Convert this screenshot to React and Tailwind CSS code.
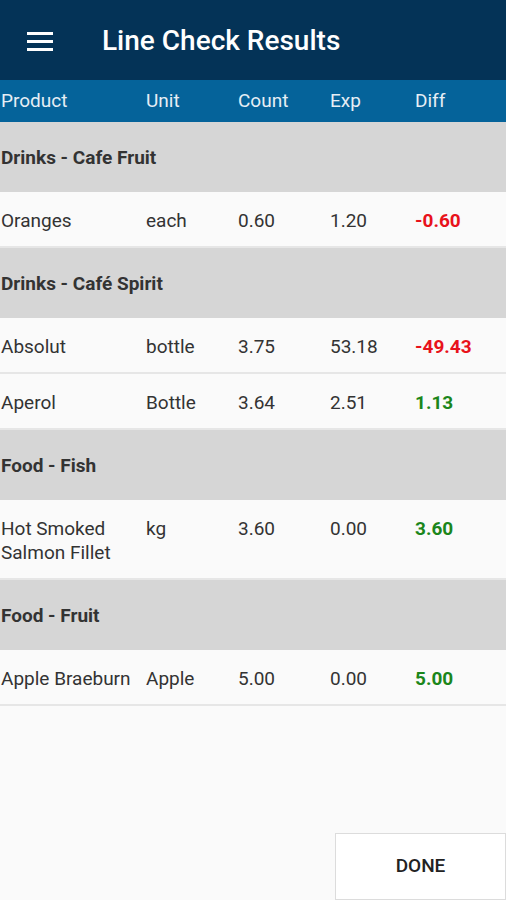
import React from "react";

const groups = [
  {
    name: "Drinks - Cafe Fruit",
    rows: [["Oranges", "each", "0.60", "1.20", "-0.60", "neg"]],
  },
  {
    name: "Drinks - Café Spirit",
    rows: [
      ["Absolut", "bottle", "3.75", "53.18", "-49.43", "neg"],
      ["Aperol", "Bottle", "3.64", "2.51", "1.13", "pos"],
    ],
  },
  {
    name: "Food - Fish",
    rows: [["Hot Smoked Salmon Fillet", "kg", "3.60", "0.00", "3.60", "pos"]],
  },
  {
    name: "Food - Fruit",
    rows: [["Apple Braeburn", "Apple", "5.00", "0.00", "5.00", "pos"]],
  },
];

const cols = "grid grid-cols-[146px_92px_92px_85px_1fr]";

export default function App() {
  return (
    <div
      className="w-[506px] h-[900px] bg-[#fafafa] flex flex-col overflow-hidden"
      style={{ fontFamily: "Roboto, 'Noto Sans', Arial, sans-serif" }}
    >
      <div className="h-[80px] bg-[#043357] flex items-center shrink-0 pt-[2px]">
        <div className="ml-[27px] w-[26px] flex flex-col gap-[5px]">
          <div className="h-[3px] bg-white" />
          <div className="h-[3px] bg-white" />
          <div className="h-[3px] bg-white" />
        </div>
        <div className="ml-[49px] text-white text-[28px] font-medium">
          Line Check Results
        </div>
      </div>
      <div
        className={`${cols} h-[42px] items-center bg-[#05639a] text-[#e6eef5] text-[19px] shrink-0`}
      >
        <div className="pl-[1px]">Product</div>
        <div>Unit</div>
        <div>Count</div>
        <div>Exp</div>
        <div>Diff</div>
      </div>
      {groups.map((g) => (
        <div key={g.name}>
          <div className="h-[70px] bg-[#d6d6d6] flex items-center pl-[1px] pt-[2px] text-[19px] font-bold text-[#333333]">
            {g.name}
          </div>
          {g.rows.map((r) => (
            <div
              key={r[0]}
              className={`${cols} pt-[17px] pb-[13px] border-b-2 border-[#e6e6e6] bg-[#fafafa] text-[19px] leading-[24px] text-[#333333]`}
            >
              <div className="pl-[1px] pr-[4px]">{r[0]}</div>
              <div>{r[1]}</div>
              <div>{r[2]}</div>
              <div>{r[3]}</div>
              <div
                className={`font-bold ${
                  r[5] === "neg" ? "text-[#e8121b]" : "text-[#1b861b]"
                }`}
              >
                {r[4]}
              </div>
            </div>
          ))}
        </div>
      ))}
      <div className="flex-1" />
      <div className="flex justify-end shrink-0">
        <button className="w-[171px] h-[67px] border border-[#dcdcdc] bg-white text-[19px] font-medium text-[#222222] flex items-center justify-center">
          DONE
        </button>
      </div>
    </div>
  );
}
